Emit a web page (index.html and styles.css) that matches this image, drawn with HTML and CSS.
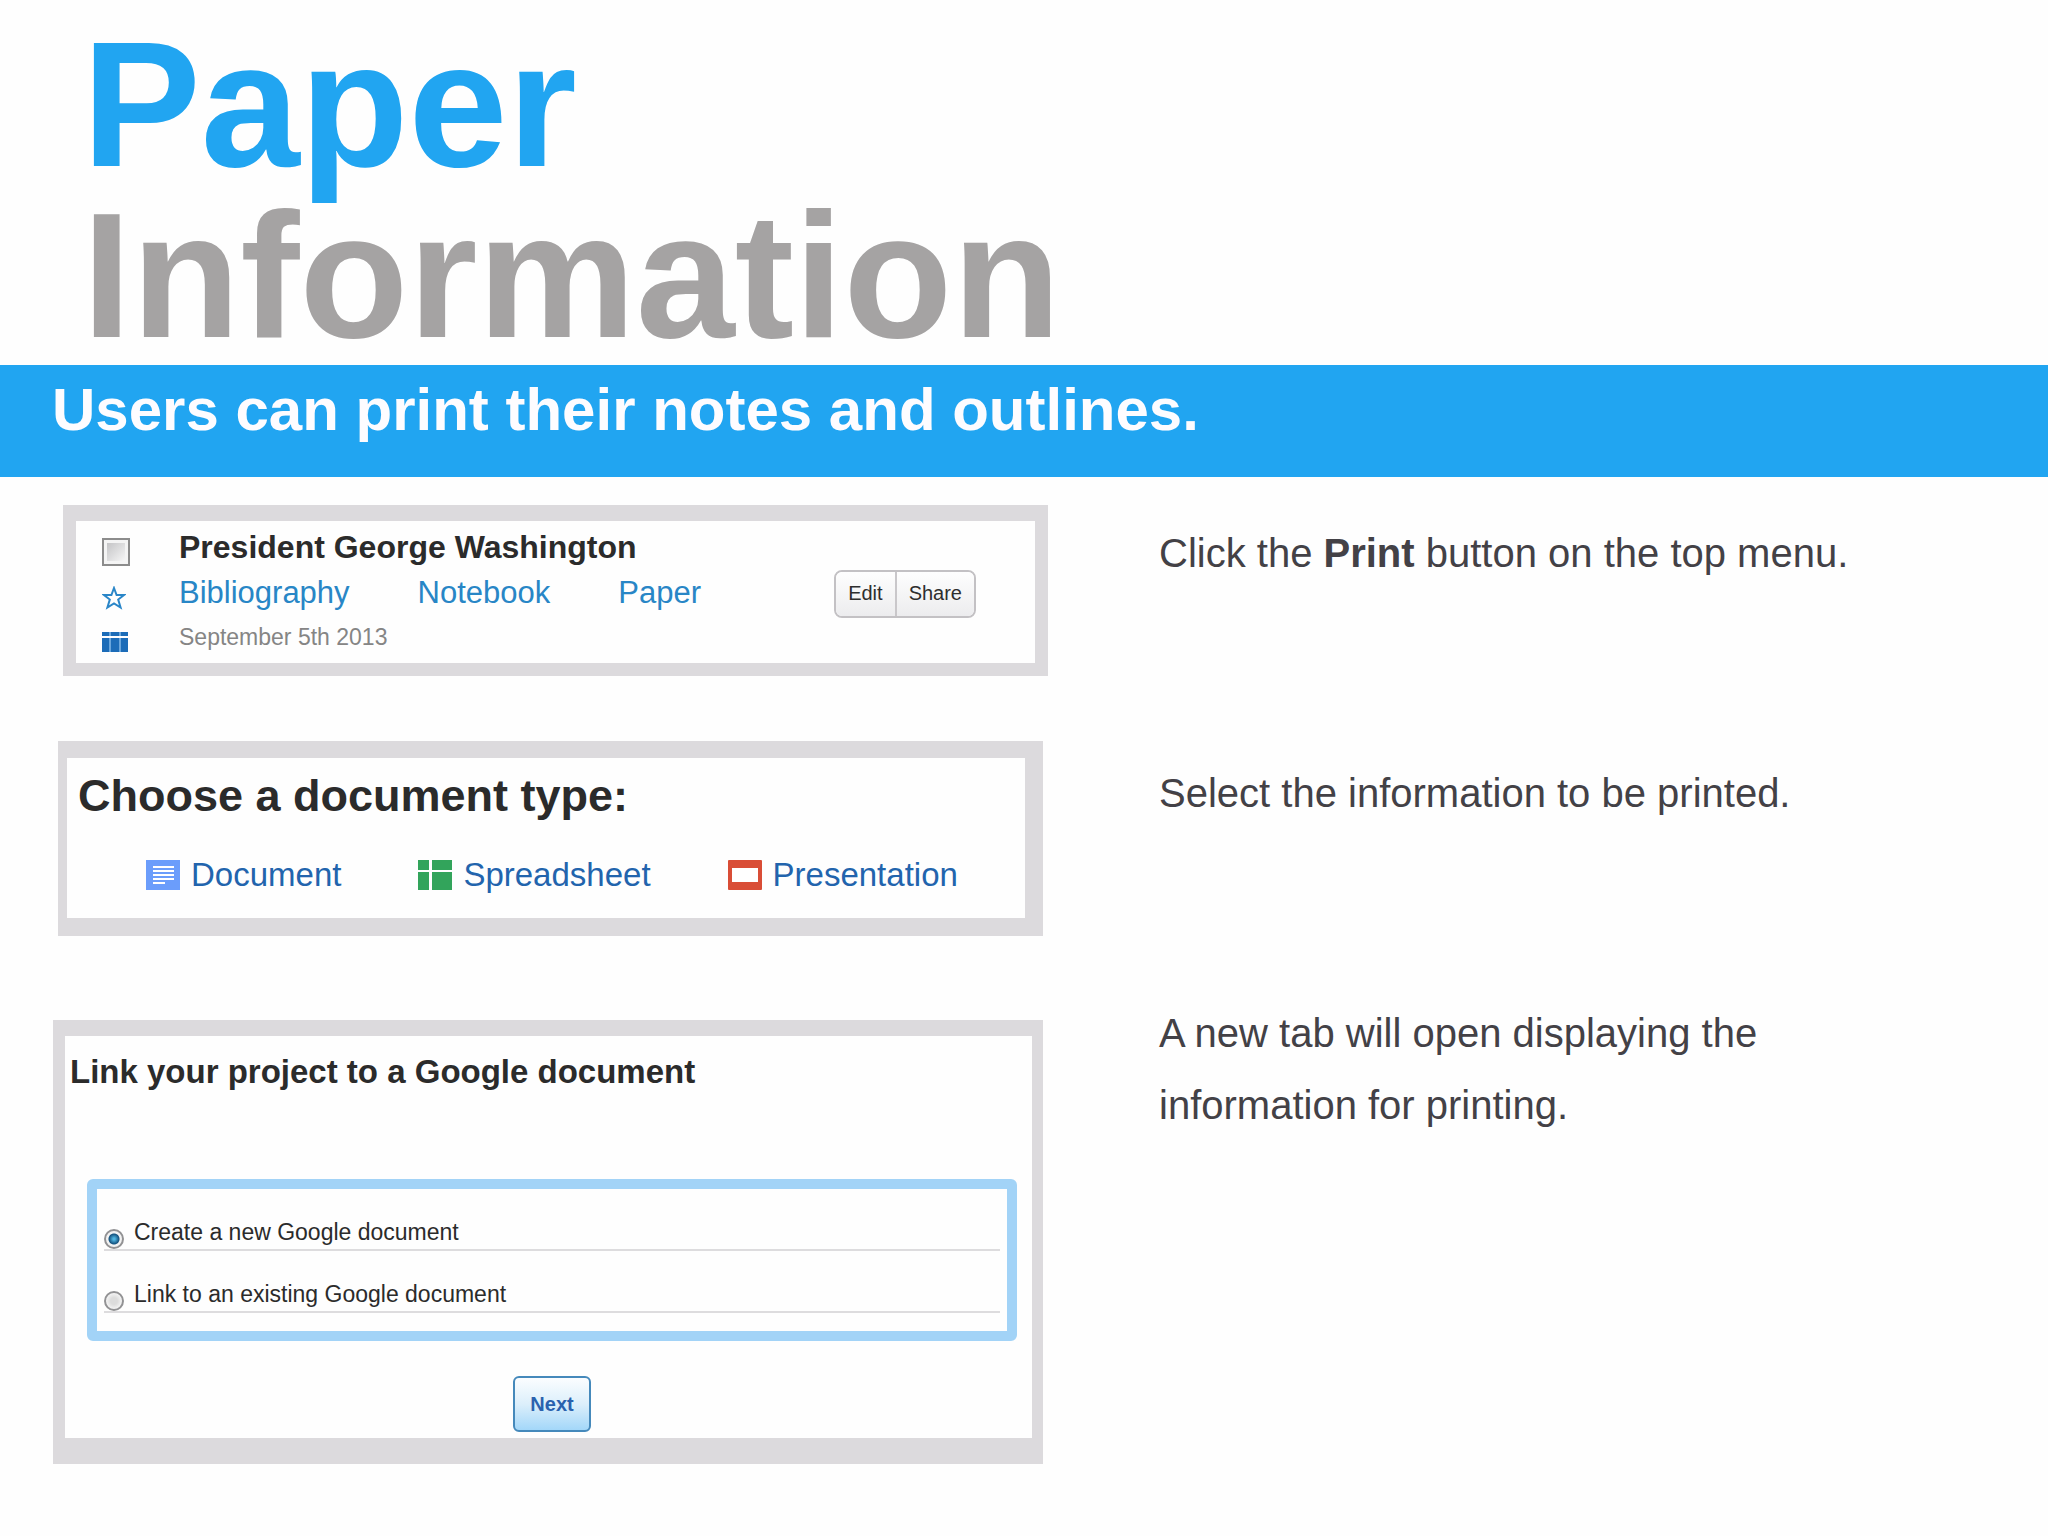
FILE: index.html
```html
<!DOCTYPE html>
<html lang="en">
<head>
<meta charset="utf-8">
<meta name="viewport" content="width=device-width, initial-scale=1">
<title>Paper Information</title>
<link rel="stylesheet" href="styles.css">
</head>
<body>
<header class="masthead">
  <h1 class="title"><span class="title-accent">Paper</span> <span class="title-muted">Information</span></h1>
</header>
<p class="banner">Users can print their notes and outlines.</p>
<main class="content">
  <div class="panels">
    <section class="panel panel-project">
      <div class="marks">
        <input class="check" type="checkbox" aria-label="Select President George Washington">
        <svg class="star" viewBox="0 0 24 24" aria-hidden="true"><path d="M12 2 L14.6 9 H22 L16.2 13.500 L18.600 21.500 L12 17.500 L5.400 21.500 L7.800 13.500 L2 9 H9.400 Z"/></svg>
        <svg class="columns" viewBox="0 0 26 22" aria-hidden="true"><path d="M0 2h26v4H0zM0 8h26v14H0z" fill="#6aa6dc"/><path d="M0 2h7v4H0zM9 2h8v4H9zM19 2h7v4h-7zM0 8h7v14H0zM9 8h8v14H9zM19 8h7v14h-7z"/></svg>
      </div>
      <div class="project">
        <h2 class="project-name">President George Washington</h2>
        <nav class="project-links">
          <a href="#bibliography">Bibliography</a>
          <a href="#notebook">Notebook</a>
          <a href="#paper">Paper</a>
        </nav>
        <p class="project-date">September 5th 2013</p>
      </div>
      <div class="actions">
        <button type="button">Edit</button>
        <button type="button">Share</button>
      </div>
    </section>

    <section class="panel panel-types">
      <h2 class="types-heading">Choose a document type:</h2>
      <nav class="types">
        <a href="#document">
          <svg viewBox="0 0 34 30" aria-hidden="true"><rect width="34" height="30" fill="#6b9dfb"/><path d="M7 7h21M7 11h21M7 15h21M7 19h21M7 23h12" stroke="#fff" stroke-width="2"/></svg>
          Document
        </a>
        <a href="#spreadsheet">
          <svg viewBox="0 0 34 30" aria-hidden="true"><path d="M0 0h11v10H0zM14 0h20v10H14zM0 12h11v18H0zM14 12h20v18H14z" fill="#32a45b"/></svg>
          Spreadsheet
        </a>
        <a href="#presentation">
          <svg viewBox="0 0 34 30" aria-hidden="true"><rect width="34" height="30" rx="1" fill="#d94d36"/><rect x="4" y="8" width="26" height="14" fill="#fff"/></svg>
          Presentation
        </a>
      </nav>
    </section>

    <section class="panel panel-link">
      <h2 class="link-heading">Link your project to a Google document</h2>
      <form class="link-form">
        <div class="options">
          <div class="option">
            <input class="radio" type="radio" name="target" id="target-new" checked>
            <label for="target-new">Create a new Google document</label>
          </div>
          <div class="option">
            <input class="radio" type="radio" name="target" id="target-existing">
            <label for="target-existing">Link to an existing Google document</label>
          </div>
        </div>
        <button class="next" type="button">Next</button>
      </form>
    </section>
  </div>

  <div class="steps">
    <p>Click the <strong>Print</strong> button on the top menu.</p>
    <p>Select the information to be printed.</p>
    <p>A new tab will open displaying the information for printing.</p>
  </div>
</main>
</body>
</html>
```

FILE: styles.css
```css
* {
  box-sizing: border-box;
}

body {
  margin: 0;
  background: #fefefe;
  color: #434146;
  font-family: "Liberation Sans", Arial, sans-serif;
}

h1,
h2,
p {
  margin: 0;
}

a {
  text-decoration: none;
}

.masthead {
  padding: 19px 82px 4px;
}

.title {
  font-size: 178px;
  line-height: 171px;
}

.title span {
  display: block;
}

.title-accent {
  color: #21a5f1;
}

.title-muted {
  color: #a5a3a3;
}

.banner {
  padding: 9px 52px 31px;
  background: #21a5f1;
  color: #fdfcff;
  font-size: 60px;
  font-weight: bold;
  line-height: 72px;
}

.content {
  display: grid;
  grid-template-columns: minmax(0, 1048fr) minmax(0, 1000fr);
}

.panels {
  padding: 28px 0 72px;
}

.panel {
  border-style: solid;
  border-color: #dcdadd;
  background: #fefefe;
  color: #2b2b2b;
}

/* Project row */
.panel-project {
  display: flex;
  align-items: flex-start;
  margin-left: 63px;
  border-width: 16px 13px 13px;
  padding: 4px 59px 3px 26px;
}

.marks {
  display: flex;
  flex-direction: column;
  gap: 20px;
  width: 77px;
  padding-top: 13px;
}

.check {
  appearance: none;
  width: 28px;
  height: 28px;
  margin: 0;
  border: 2px solid #8c8c8c;
  background: linear-gradient(135deg, #c4c4c6, #f6f6f6) content-box, #f4f4f4;
  padding: 3px;
}

.star {
  width: 24px;
  height: 24px;
  fill: none;
  stroke: #2a86c8;
  stroke-width: 2;
}

.columns {
  width: 26px;
  height: 22px;
  fill: #1c6cb8;
}

.project {
  flex: 1;
  line-height: 45px;
}

.project-name {
  font-size: 32px;
}

.project-links {
  display: flex;
  gap: 68px;
  font-size: 31px;
}

.project-links a {
  color: #2886c6;
}

.project-date {
  color: #858585;
  font-size: 23px;
}

.actions {
  display: flex;
  align-self: center;
  margin-top: 2px;
  border: 2px solid #c3c1c4;
  border-radius: 8px;
  overflow: hidden;
}

.actions button {
  height: 44px;
  border: 0;
  padding: 0 12px;
  background: linear-gradient(#fefefe, #ececee);
  color: #2e2e2e;
  font-family: inherit;
  font-size: 20px;
}

.actions button + button {
  border-left: 2px solid #c9c7ca;
}

/* Document types */
.panel-types {
  margin: 65px 5px 0 58px;
  border-width: 17px 18px 18px 9px;
  padding: 13px 11px 23px;
}

.types-heading {
  font-size: 45px;
  line-height: 50px;
}

.types {
  display: flex;
  gap: 77px;
  margin-top: 34px;
  padding-left: 68px;
  font-size: 33px;
  line-height: 40px;
}

.types a {
  display: flex;
  align-items: center;
  gap: 11px;
  color: #2264ad;
}

.types svg {
  width: 34px;
  height: 30px;
}

/* Link to Google document */
.panel-link {
  margin: 84px 5px 0 53px;
  border-width: 16px 11px 26px 12px;
  padding: 16px 0 6px;
}

.link-heading {
  padding-left: 5px;
  font-size: 33px;
  line-height: 40px;
}

.link-form {
  margin: 87px 15px 0 22px;
}

.options {
  border: 10px solid #a2d3f7;
  border-radius: 6px;
  padding: 0 7px 18px;
}

.option {
  display: flex;
  align-items: flex-end;
  gap: 10px;
  height: 62px;
  border-bottom: 2px solid #dddcde;
  font-size: 23px;
  line-height: 34px;
}

.radio {
  appearance: none;
  width: 20px;
  height: 20px;
  margin: 0;
  border: 2px solid #929294;
  border-radius: 50%;
  background: radial-gradient(circle, #dcdcdc 30%, #f4f4f4 70%);
}

.radio:checked {
  background: radial-gradient(circle, #4fb4e0 0 1px, #14527f 5px, #f2f2f2 6px);
}

.next {
  display: block;
  width: 78px;
  height: 56px;
  margin: 35px auto 0;
  border: 2px solid #4589bb;
  border-radius: 6px;
  padding: 0;
  background: linear-gradient(#fbfdff, #dceffb 50%, #a3d7f9);
  color: #2a62ae;
  font-family: inherit;
  font-size: 20px;
  font-weight: bold;
}

/* Instructions */
.steps {
  display: flex;
  flex-direction: column;
  gap: 168px;
  max-width: 860px;
  padding: 40px 40px 40px 111px;
  font-size: 40px;
  line-height: 72px;
}
```
